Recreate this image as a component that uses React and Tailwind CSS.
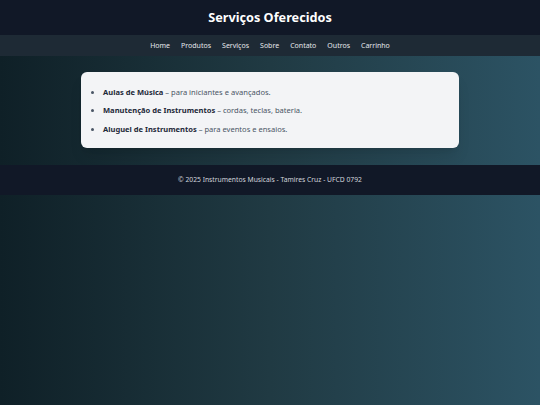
import React from 'react';

const NAV_LINKS = ['Home', 'Produtos', 'Serviços', 'Sobre', 'Contato', 'Outros', 'Carrinho'];

const SERVICES = [
  { title: 'Aulas de Música', desc: 'para iniciantes e avançados.' },
  { title: 'Manutenção de Instrumentos', desc: 'cordas, teclas, bateria.' },
  { title: 'Aluguel de Instrumentos', desc: 'para eventos e ensaios.' }
];

export default function App() {
  return (
    <div
      className="min-h-[405px] w-full bg-gradient-to-r from-[#0f2027] via-[#203a43] to-[#2c5364] text-white"
      style={{ fontFamily: '"Noto Sans", "Open Sans", sans-serif' }}
    >
      <header className="h-[35px] bg-[#111827] flex items-center justify-center">
        <h1 className="text-[12.7px] font-bold leading-none">Serviços Oferecidos</h1>
      </header>

      <nav className="h-[21px] bg-[#1e2a35] flex items-center justify-center gap-[11px]">
        {NAV_LINKS.map(link => (
          <a key={link} href="#" className="text-[7px] text-gray-200 leading-none">
            {link}
          </a>
        ))}
      </nav>

      <main className="pt-[16px] pb-[17px]">
        <div className="mx-auto w-[70%] h-[76px] bg-[#f3f4f6] rounded-[6px] shadow-lg px-[14px] flex items-center">
          <ul className="list-disc pl-[8px] space-y-[5px] text-[7.55px] leading-[13.5px] text-gray-600 pt-[2px]">
            {SERVICES.map(s => (
              <li key={s.title}>
                <strong className="font-bold text-gray-800">{s.title}</strong> – {s.desc}
              </li>
            ))}
          </ul>
        </div>
      </main>

      <footer className="h-[30px] bg-[#111827] flex items-center justify-center">
        <p className="text-[6.75px] text-gray-300 leading-none">
          © 2025 Instrumentos Musicais - Tamires Cruz - UFCD 0792
        </p>
      </footer>
    </div>
  );
}
